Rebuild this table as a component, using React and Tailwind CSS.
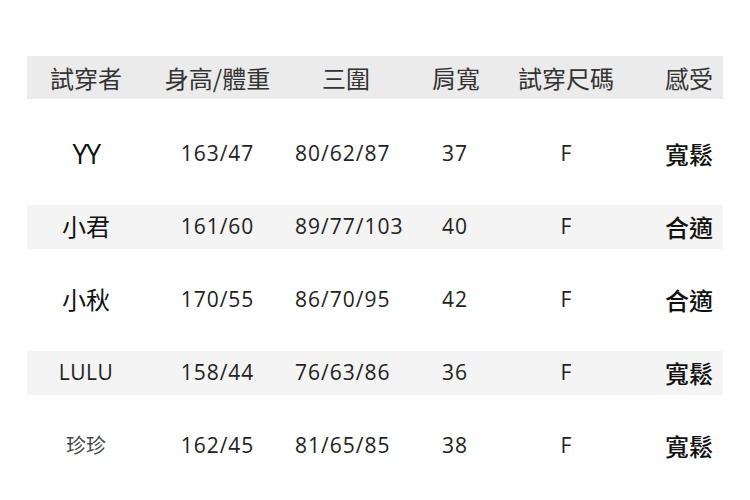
import React from "react";

const ROWS = [
  { name: "YY", nameCls: "text-[27px] tracking-[-1.5px] font-medium text-[#111]", hw: "163/47", bwh: "80/62/87", sh: "37", size: "F", feel: "寬鬆", band: false },
  { name: "小君", nameCls: "text-[24px] text-[#111]", hw: "161/60", bwh: "89/77/103", sh: "40", size: "F", feel: "合適", band: true },
  { name: "小秋", nameCls: "text-[24px] text-[#111]", hw: "170/55", bwh: "86/70/95", sh: "42", size: "F", feel: "合適", band: false },
  { name: "LULU", nameCls: "text-[21px] tracking-[0.5px] text-[#222]", hw: "158/44", bwh: "76/63/86", sh: "36", size: "F", feel: "寬鬆", band: true },
  { name: "珍珍", nameCls: "text-[20px] text-[#444]", hw: "162/45", bwh: "81/65/85", sh: "38", size: "F", feel: "寬鬆", band: false }
];

const GRID = "grid grid-cols-[118px_145px_130px_80px_132px_91px] items-center";

export default function App() {
  return (
    <div className="w-[750px] h-[500px] bg-white font-['Open_Sans','Noto_Sans_CJK_TC',sans-serif] overflow-hidden">
      <div className="pt-[56px] pl-[27px] flex flex-col gap-[29px]">
        <div className={`${GRID} h-[43px] mb-[4px] w-[696px] bg-[#ebebeb] text-[24px] text-[#333] font-['Noto_Sans_CJK_TC',sans-serif]`}>
          <div className="text-center">試穿者</div>
          <div className="text-center">身高/體重</div>
          <div className="pl-[32px]">三圍</div>
          <div className="pl-[12px]">肩寬</div>
          <div className="text-center">試穿尺碼</div>
          <div className="text-right pr-[10px]">感受</div>
        </div>

        {ROWS.map((r) => (
          <div key={r.name} className={`${GRID} h-[44px] w-[696px] ${r.band ? "bg-[#f4f4f4]" : ""}`}>
            <div className={`text-center ${r.nameCls}`}>{r.name}</div>
            <div className="text-center text-[21px] tracking-[1px] text-[#222]">{r.hw}</div>
            <div className="pl-[5px] text-[21px] tracking-[1px] text-[#222]">{r.bwh}</div>
            <div className="pl-[22px] text-[21px] tracking-[1px] text-[#222]">{r.sh}</div>
            <div className="text-center text-[21px] text-[#222]">{r.size}</div>
            <div className="text-right pr-[10px] text-[24px] font-medium text-[#111] font-['Noto_Sans_CJK_TC',sans-serif]">{r.feel}</div>
          </div>
        ))}
      </div>
    </div>
  );
}
